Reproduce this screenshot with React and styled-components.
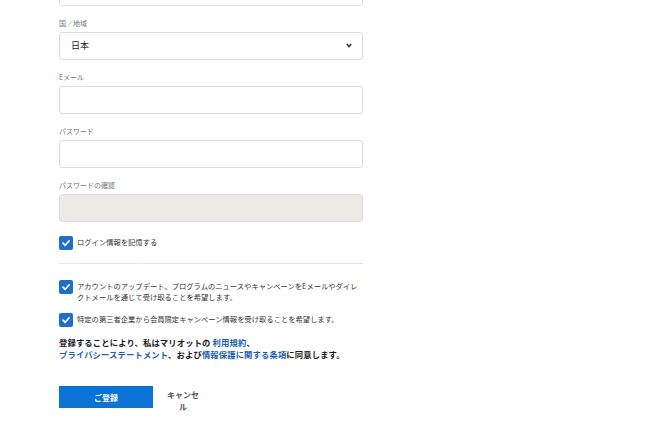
import React from "react";
import styled, { createGlobalStyle } from "styled-components";

const GlobalStyle = createGlobalStyle`
  body {
    margin: 0;
    background: #ffffff;
    font-family: "Noto Sans CJK JP", "Noto Sans", sans-serif;
  }
`;

const Page = styled.div`
  width: 650px;
  height: 423px;
  overflow: hidden;
  padding-left: 59px;
  box-sizing: border-box;
`;

const Form = styled.div`
  width: 304px;
  margin-top: -22px;
  display: flex;
  flex-direction: column;
`;

const Field = styled.div`
  display: flex;
  flex-direction: column;
  margin-bottom: 12px;
`;

const Label = styled.label`
  font-size: 7px;
  line-height: 10px;
  color: #777;
  margin-bottom: 4px;
  height: 10px;
`;

const Input = styled.div`
  height: 28px;
  box-sizing: border-box;
  border: 1px solid #dedede;
  border-radius: 3px;
  background: ${(p) => (p.disabled ? "#ebeae6" : "#fff")};
  display: flex;
  align-items: center;
  justify-content: space-between;
  padding: 0 10px 2px 11px;
  font-size: 9px;
  color: #222;
`;

const CheckRow = styled.div`
  display: flex;
  align-items: flex-start;
  gap: 4px;
  margin-top: ${(p) => p.top || 0}px;
`;

const Box = styled.span`
  flex: 0 0 14px;
  width: 14px;
  height: 14px;
  border-radius: 2px;
  background: #1f6fc8;
  display: flex;
  align-items: center;
  justify-content: center;
`;

const CheckText = styled.span`
  font-size: 7.3px;
  line-height: 11px;
  color: #333;
  padding-top: 1px;
`;

const Divider = styled.hr`
  border: 0;
  border-top: 1px solid #e6e6e6;
  margin: 13px 0 16px;
  width: 100%;
`;

const Terms = styled.p`
  margin: 9px 0 0;
  font-size: 8.3px;
  line-height: 12px;
  letter-spacing: 0.15px;
  font-weight: bold;
  color: #1a1a1a;
`;

const Link = styled.a`
  color: #1c5fae;
  text-decoration: none;
`;

const Actions = styled.div`
  display: flex;
  align-items: flex-start;
  gap: 4px;
  margin-top: 26px;
`;

const Submit = styled.button`
  width: 94px;
  height: 22px;
  border: 0;
  background: #0b72d6;
  color: #fff;
  font-family: inherit;
  font-size: 8px;
  font-weight: bold;
  padding: 0;
`;

const Cancel = styled.button`
  width: 52px;
  border: 0;
  background: none;
  font-family: inherit;
  font-size: 8px;
  font-weight: bold;
  line-height: 12px;
  color: #555;
  padding: 3px 9px 0;
  text-align: center;
`;

const Check = () => (
  <Box>
    <svg width="10" height="10" viewBox="0 0 10 10">
      <path d="M2 5.2 L4.2 7.3 L8.2 2.8" fill="none" stroke="#fff" strokeWidth="1.7" strokeLinecap="round" strokeLinejoin="round" />
    </svg>
  </Box>
);

const Chevron = () => (
  <svg width="6" height="5" viewBox="0 0 6 5">
    <path d="M0.8 1 L3 3.5 L5.2 1" fill="none" stroke="#333" strokeWidth="1.5" />
  </svg>
);

export default function App() {
  return (
    <Page>
      <GlobalStyle />
      <Form>
        <Field>
          <Input />
        </Field>
        <Field>
          <Label>国／地域</Label>
          <Input>
            日本
            <Chevron />
          </Input>
        </Field>
        <Field>
          <Label>Eメール</Label>
          <Input />
        </Field>
        <Field>
          <Label>パスワード</Label>
          <Input />
        </Field>
        <Field>
          <Label>パスワードの確認</Label>
          <Input disabled />
        </Field>
        <CheckRow top={2}>
          <Check />
          <CheckText>ログイン情報を記憶する</CheckText>
        </CheckRow>
        <Divider />
        <CheckRow>
          <Check />
          <CheckText>
            アカウントのアップデート、プログラムのニュースやキャンペーンをEメールやダイレクトメールを通じて受け取ることを希望します。
          </CheckText>
        </CheckRow>
        <CheckRow top={10}>
          <Check />
          <CheckText>特定の第三者企業から会員限定キャンペーン情報を受け取ることを希望します。</CheckText>
        </CheckRow>
        <Terms>
          登録することにより、私はマリオットの <Link>利用規約</Link>、
          <br />
          <Link>プライバシーステートメント</Link>、および<Link>情報保護に関する条項</Link>に同意します。
        </Terms>
        <Actions>
          <Submit>ご登録</Submit>
          <Cancel>キャンセル</Cancel>
        </Actions>
      </Form>
    </Page>
  );
}
